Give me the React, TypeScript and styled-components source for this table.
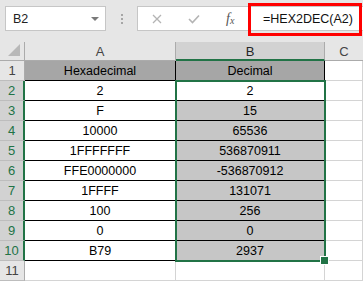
import React from 'react';
import styled, { createGlobalStyle } from "styled-components";

const GREEN = '#217346'

const rows: [string, string][] = [
    ['Hexadecimal', 'Decimal'],
    ['2', '2'],
    ['F', '15'],
    ['10000', '65536'],
    ['1FFFFFFF', '536870911'],
    ['FFE0000000', '-536870912'],
    ['1FFFF', '131071'],
    ['100', '256'],
    ['0', '0'],
    ['B79', '2937'],
]

const GlobalStyle = createGlobalStyle`
    body {
        margin: 0;
        background: #fff;
        font-family: "Liberation Sans", Arial, sans-serif;
        overflow: hidden;
    }
`

export default function App() {
    return (
        <Page>
            <GlobalStyle/>
            <Toolbar>
                <NameBox>
                    <span>B2</span>
                    <DropArrow/>
                </NameBox>
                <Grip>
                    <i/><i/><i/>
                </Grip>
                <FormulaBar>
                    <FormulaButtons>
                        <svg width="10" height="10" viewBox="0 0 10 10">
                            <path d="M1 1 L9 9 M9 1 L1 9" stroke="#b4b4b4" strokeWidth="1.3" fill="none"/>
                        </svg>
                        <svg width="12" height="10" viewBox="0 0 12 10">
                            <path d="M1 5 L4.5 8.5 L11 1.5" stroke="#b4b4b4" strokeWidth="1.6" fill="none"/>
                        </svg>
                        <Fx>f<sub>x</sub></Fx>
                    </FormulaButtons>
                    <FormulaText>=HEX2DEC(A2)</FormulaText>
                </FormulaBar>
                <Highlight/>
            </Toolbar>
            <Sheet>
                <Corner>
                    <svg width="13" height="13" viewBox="0 0 13 13">
                        <path d="M12 0 L12 12 L0 12 Z" fill="#b8b8b8"/>
                    </svg>
                </Corner>
                <ColHead>A</ColHead>
                <ColHead $active>B</ColHead>
                <ColHead $last>C</ColHead>

                {rows.map((r, i) => {
                    const n = i + 1
                    return (
                        <React.Fragment key={n}>
                            <RowHead $active={n >= 2}>{n}</RowHead>
                            <Cell $fill={n === 1 ? '#a6a6a6' : '#fff'}>{r[0]}</Cell>
                            <Cell $fill={n === 1 ? '#a6a6a6' : n === 2 ? '#fff' : '#c6c6c6'}>{r[1]}</Cell>
                            <Blank/>
                        </React.Fragment>
                    )
                })}
                <RowHead>11</RowHead>
                <Blank/>
                <Blank/>
                <Blank/>

                <Selection>
                    <Handle/>
                </Selection>
            </Sheet>
        </Page>
    );
}

const Page = styled.div`
    width: 363px;
    height: 282px;
    overflow: hidden;
`
const Toolbar = styled.div`
    position: relative;
    height: 42px;
    background: #e6e6e6;
    display: flex;
    align-items: flex-start;
    padding-top: 6px;
    box-sizing: border-box;
`
const NameBox = styled.div`
    margin-left: 5px;
    width: 101px;
    height: 25px;
    box-sizing: border-box;
    background: #fff;
    border: 1px solid #c6c6c6;
    display: flex;
    align-items: center;
    justify-content: space-between;
    padding: 0 6px 0 7px;
    font-size: 12.5px;
    color: #222;
`
const DropArrow = styled.span`
    width: 0;
    height: 0;
    border-left: 4px solid transparent;
    border-right: 4px solid transparent;
    border-top: 4px solid #7a7a7a;
`
const Grip = styled.div`
    width: 31px;
    height: 25px;
    display: flex;
    flex-direction: column;
    align-items: center;
    justify-content: center;
    gap: 2px;

    i {
        width: 2px;
        height: 2px;
        background: #a6a6a6;
    }
`
const FormulaBar = styled.div`
    flex: 1;
    height: 25px;
    box-sizing: border-box;
    background: #fff;
    border: 1px solid #c6c6c6;
    border-right: none;
    display: flex;
    align-items: center;
`
const FormulaButtons = styled.div`
    width: 111px;
    display: flex;
    align-items: center;
    padding-left: 14px;
    gap: 26px;
    box-sizing: border-box;
`
const Fx = styled.span`
    font-family: "Liberation Serif", serif;
    font-style: italic;
    font-size: 14px;
    color: #555;
    margin-left: 0;

    sub {
        font-size: 10px;
        vertical-align: -1px;
    }
`
const FormulaText = styled.span`
    padding-left: 14px;
    font-size: 12.5px;
    color: #111;
`
const Highlight = styled.div`
    position: absolute;
    left: 248px;
    top: 3px;
    width: 114px;
    height: 33px;
    box-sizing: border-box;
    border: 3px solid #ff0000;
`
const Sheet = styled.div`
    position: relative;
    display: grid;
    grid-template-columns: 25px 151px 149px 1fr;
    grid-template-rows: 19px;
    grid-auto-rows: 20px;
`
const Corner = styled.div`
    background: #e6e6e6;
    border-right: 1px solid #ababab;
    border-bottom: 1px solid #ababab;
    box-sizing: border-box;
    display: flex;
    align-items: flex-end;
    justify-content: flex-end;
    padding: 0 3px 3px 0;
`
const ColHead = styled.div<{ $active?: boolean, $last?: boolean }>`
    box-sizing: border-box;
    background: ${p => p.$active ? '#d2d2d2' : '#e6e6e6'};
    color: ${p => p.$active ? '#262626' : '#444'};
    border-right: ${p => p.$last ? 'none' : '1px solid #ababab'};
    border-bottom: ${p => p.$active ? `2px solid ${GREEN}` : '1px solid #ababab'};
    font-size: 13px;
    display: flex;
    align-items: center;
    justify-content: center;
    padding-top: 1px;
`
const RowHead = styled.div<{ $active?: boolean }>`
    box-sizing: border-box;
    background: ${p => p.$active ? '#d2d2d2' : '#e6e6e6'};
    color: ${p => p.$active ? GREEN : '#444'};
    border-right: ${p => p.$active ? `2px solid ${GREEN}` : '1px solid #ababab'};
    border-bottom: 1px solid #bdbdbd;
    font-size: 13px;
    display: flex;
    align-items: center;
    justify-content: center;
`
const Cell = styled.div<{ $fill: string }>`
    box-sizing: border-box;
    background: ${p => p.$fill};
    border-right: 1px solid #000;
    border-bottom: 1px solid #000;
    font-size: 12.5px;
    color: #000;
    display: flex;
    align-items: center;
    justify-content: center;
    padding-top: 1px;
`
const Blank = styled.div`
    box-sizing: border-box;
    border-right: 1px solid #d4d4d4;
    border-bottom: 1px solid #d4d4d4;
`
const Selection = styled.div`
    position: absolute;
    left: 175px;
    top: 38px;
    width: 151px;
    height: 182px;
    box-sizing: border-box;
    border: 2px solid ${GREEN};
    pointer-events: none;
`
const Handle = styled.div`
    position: absolute;
    right: -5px;
    bottom: -5px;
    width: 7px;
    height: 7px;
    background: ${GREEN};
    border: 1px solid #fff;
`
